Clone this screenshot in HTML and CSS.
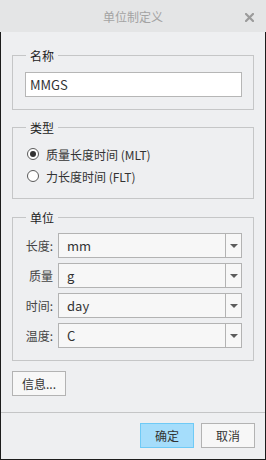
FILE: index.html
```html
<!DOCTYPE html>
<html lang="zh">
<head>
<meta charset="utf-8">
<title>单位制定义</title>
<link rel="stylesheet" href="styles.css">
</head>
<body>
<div class="titlebar">
  <span class="title">单位制定义</span>
  <span class="close">
    <svg width="9" height="9" viewBox="0 0 9 9"><path d="M1 1 L8 8 M8 1 L1 8" stroke="#9b9b9b" stroke-width="2.2" stroke-linecap="square"/></svg>
  </span>
</div>
<div class="frame">
  <div class="main">
    <fieldset class="group group-name">
      <legend>名称</legend>
      <div class="textbox">MMGS</div>
    </fieldset>
    <fieldset class="group group-type">
      <legend>类型</legend>
      <div class="radio-row"><span class="radio checked"></span><span>质量长度时间 (MLT)</span></div>
      <div class="radio-row"><span class="radio"></span><span>力长度时间 (FLT)</span></div>
    </fieldset>
    <fieldset class="group group-units">
      <legend>单位</legend>
      <div class="unit-grid">
        <span class="unit-label">长度:</span>
        <div class="combo"><span class="combo-value">mm</span><span class="combo-btn"><span class="arrow"></span></span></div>
        <span class="unit-label">质量</span>
        <div class="combo"><span class="combo-value">g</span><span class="combo-btn"><span class="arrow"></span></span></div>
        <span class="unit-label">时间:</span>
        <div class="combo"><span class="combo-value">day</span><span class="combo-btn"><span class="arrow"></span></span></div>
        <span class="unit-label">温度:</span>
        <div class="combo"><span class="combo-value">C</span><span class="combo-btn"><span class="arrow"></span></span></div>
      </div>
    </fieldset>
    <button class="btn btn-info">信息...</button>
  </div>
  <div class="footer">
    <button class="btn btn-primary">确定</button>
    <button class="btn">取消</button>
  </div>
</div>
</body>
</html>
```

FILE: styles.css
```css
html, body {
  margin: 0;
  padding: 0;
}
body {
  width: 266px;
  height: 460px;
  background: #eeeff1;
  font-family: "Noto Sans CJK SC", "Microsoft YaHei", sans-serif;
  font-size: 12px;
  color: #333;
  display: flex;
  flex-direction: column;
}
.titlebar {
  height: 32px;
  flex: none;
  background: #e4e5e6;
  display: flex;
  align-items: center;
  justify-content: center;
  position: relative;
}
.title {
  color: #a3a3a3;
  font-size: 12px;
  line-height: 16px;
  margin-top: 1px;
}
.close {
  position: absolute;
  right: 12px;
  top: 13px;
  width: 9px;
  height: 9px;
  display: flex;
}
.frame {
  flex: 1;
  box-sizing: border-box;
  border: 1px solid #1c1c1c;
  border-top: none;
  display: flex;
  flex-direction: column;
}
.main {
  padding: 0 11px;
  display: flex;
  flex-direction: column;
  align-items: flex-start;
}
.group {
  align-self: stretch;
  margin: 8px 0 0 0;
  border: 1px solid #c5c6c7;
  padding: 7px 11px 12px 12px;
  min-width: 0;
}
.group legend {
  padding: 0 4px;
  margin-left: 1px;
  line-height: 19px;
  height: 19px;
  color: #222;
}
.group-name {
  margin-top: 14px;
}
.group-type {
  padding-top: 6px;
  padding-bottom: 11px;
}
.group-units {
  margin-top: 9px;
  padding-top: 6px;
  padding-bottom: 12px;
}
.textbox {
  height: 25px;
  box-sizing: border-box;
  border: 1px solid #b6b6b6;
  background: #fff;
  padding: 0 4px;
  line-height: 23px;
  font-size: 13px;
  color: #333;
}
.radio-row {
  height: 22px;
  display: flex;
  align-items: center;
  gap: 7px;
  padding-left: 2px;
  color: #333;
}
.radio {
  width: 12px;
  height: 12px;
  box-sizing: border-box;
  border: 1px solid #5a5a5a;
  border-radius: 50%;
  background: #fff;
  display: flex;
  align-items: center;
  justify-content: center;
}
.radio.checked::after {
  content: "";
  width: 6px;
  height: 6px;
  border-radius: 50%;
  background: #333;
}
.unit-grid {
  display: grid;
  grid-template-columns: 28px 1fr;
  column-gap: 5px;
  row-gap: 5px;
  align-items: center;
}
.unit-label {
  text-align: right;
  color: #444;
  white-space: nowrap;
}
.combo {
  height: 25px;
  box-sizing: border-box;
  border: 1px solid #b3b3b3;
  background: #f7f7f7;
  display: flex;
}
.combo-value {
  flex: 1;
  padding-left: 8px;
  line-height: 23px;
  font-size: 13px;
  color: #333;
}
.combo-btn {
  width: 15px;
  border-left: 1px solid #b3b3b3;
  display: flex;
  align-items: center;
  justify-content: center;
}
.arrow {
  width: 0;
  height: 0;
  border-left: 4px solid transparent;
  border-right: 4px solid transparent;
  border-top: 4px solid #5c5c5c;
}
.btn {
  font-family: inherit;
  font-size: 12px;
  color: #333;
  height: 25px;
  width: 54px;
  box-sizing: border-box;
  border: 1px solid #b3b3b3;
  background: #f7f7f7;
  padding: 0;
  margin: 0;
  border-radius: 0;
  line-height: 23px;
}
.btn-info {
  margin-top: 10px;
}
.footer {
  margin-top: auto;
  height: 47px;
  box-sizing: border-box;
  border-top: 1px solid #c4c5c6;
  display: flex;
  justify-content: flex-end;
  gap: 7px;
  padding: 10px 10px 0 0;
}
.btn-primary {
  background: #a5ddfb;
  border-color: #6fcaf6;
}
```
